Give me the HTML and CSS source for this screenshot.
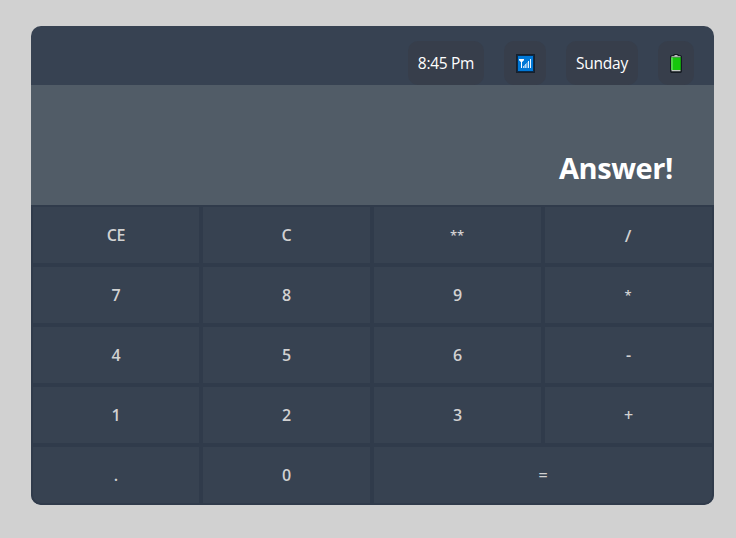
FILE: index.html
```html
<!DOCTYPE html>
<html lang="en">
<head>
<meta charset="utf-8">
<title>Calculator</title>
<link rel="stylesheet" href="styles.css">
</head>
<body>
<main class="calculator">
  <header class="status">
    <span class="chip time"><span>8:45 Pm</span></span>
    <span class="chip signal">
      <svg width="19" height="19" viewBox="0 0 19 19" shape-rendering="crispEdges" aria-hidden="true">
        <rect width="19" height="19" rx="1" fill="#17202b"/>
        <rect x="1" y="1" width="17" height="17" fill="#0a2a4a"/>
        <rect x="2" y="2" width="15" height="15" fill="#0078d7"/>
        <path d="M3 5h5v1H3zM4 6h3v1H4zM5 7h1v7H5z" fill="#fff"/>
        <path d="M3 6h1v1H3zM7 6h1v1H7zM4 7h1v1H4zM6 7h1v1H6z" fill="#a9d3f5"/>
        <path d="M7 12h1v2H7zM9 10h1v4H9z" fill="#b5d9f5"/>
        <path d="M8 11h1v3H8zM10 9h1v5h-1z" fill="#72b5eb"/>
        <path d="M12 7h1v7h-1zM14 5h1v9h-1z" fill="#e6f4ff"/>
        <path d="M11 8h1v6h-1z" fill="#4b9fe2"/>
      </svg>
    </span>
    <span class="chip day"><span>Sunday</span></span>
    <span class="chip battery">
      <svg width="12" height="19" viewBox="0 0 12 19" aria-hidden="true">
        <path d="M4 0h4l1 1.2h2L12 2.5v15L11 19H1l-1-1.500V2.500L1 1.200h2z" fill="#151b22"/>
        <path d="M4.500 1h3v1.500h-3z" fill="#c0c0c0"/>
        <path d="M1.500 2.200h9v1.300h-9zM1.500 16h9v1.200h-9z" fill="#c5cbc5"/>
        <path d="M1 3.500h10V16H1z" fill="#16c60c"/>
        <path d="M1 3.500h2V16H1z" fill="#52d34a"/>
        <path d="M10 3.500h1V16h-1z" fill="#139e0d"/>
      </svg>
    </span>
  </header>
  <section class="display"><span>Answer!</span></section>
  <section class="keys">
    <button class="word">CE</button><button>C</button><button class="star">**</button><button class="slash">/</button>
    <button>7</button><button>8</button><button>9</button><button class="star">*</button>
    <button>4</button><button>5</button><button>6</button><button>-</button>
    <button>1</button><button>2</button><button>3</button><button>+</button>
    <button>.</button><button>0</button><button class="equals">=</button>
  </section>
</main>
</body>
</html>
```
FILE: styles.css
```css
* { box-sizing: border-box; }

body {
  margin: 0;
  padding: 26px 22px 33px 31px;
  height: 538px;
  background: #d1d1d1;
  font-family: "Segoe UI", "Open Sans", "Noto Sans", sans-serif;
}

.calculator {
  width: 683px;
  border-radius: 10px;
  overflow: hidden;
  background: #374252;
}

.status {
  display: flex;
  justify-content: flex-end;
  gap: 20px;
  height: 59px;
  padding: 15px 20px 0 0;
}

.chip {
  display: flex;
  align-items: center;
  justify-content: center;
  height: 44px;
  border-radius: 10px;
  background: #373e4b;
  color: #fff;
  font-size: 15.5px;
  white-space: nowrap;
}

.time { width: 76px; letter-spacing: -0.3px; }
.signal { width: 42px; }
.day { width: 72px; letter-spacing: -0.2px; }
.battery { width: 36px; }

.display {
  display: flex;
  justify-content: flex-end;
  height: 120px;
  padding: 63px 41px 0 0;
  background: #515c67;
  color: #fff;
  font-size: 29px;
  font-weight: 700;
  letter-spacing: -0.4px;
  line-height: 40px;
}

.keys {
  display: grid;
  grid-template-columns: 170px repeat(3, 171px);
  grid-auto-rows: 60px;
}

.keys button {
  margin: 0;
  padding: 0;
  border: 2px solid #303b4b;
  background: #374251;
  color: #d1d1d1;
  font-family: inherit;
  font-size: 16px;
  font-weight: 600;
}

.keys .word { letter-spacing: -0.3px; }
.keys .star { padding-right: 1px; font-size: 13px; }
.keys .slash { padding-right: 1px; font-size: 17px; }

.keys .equals { grid-column: span 2; }
.keys button:nth-last-child(3) { border-bottom-left-radius: 10px; }
.keys .equals { border-bottom-right-radius: 10px; }
```
